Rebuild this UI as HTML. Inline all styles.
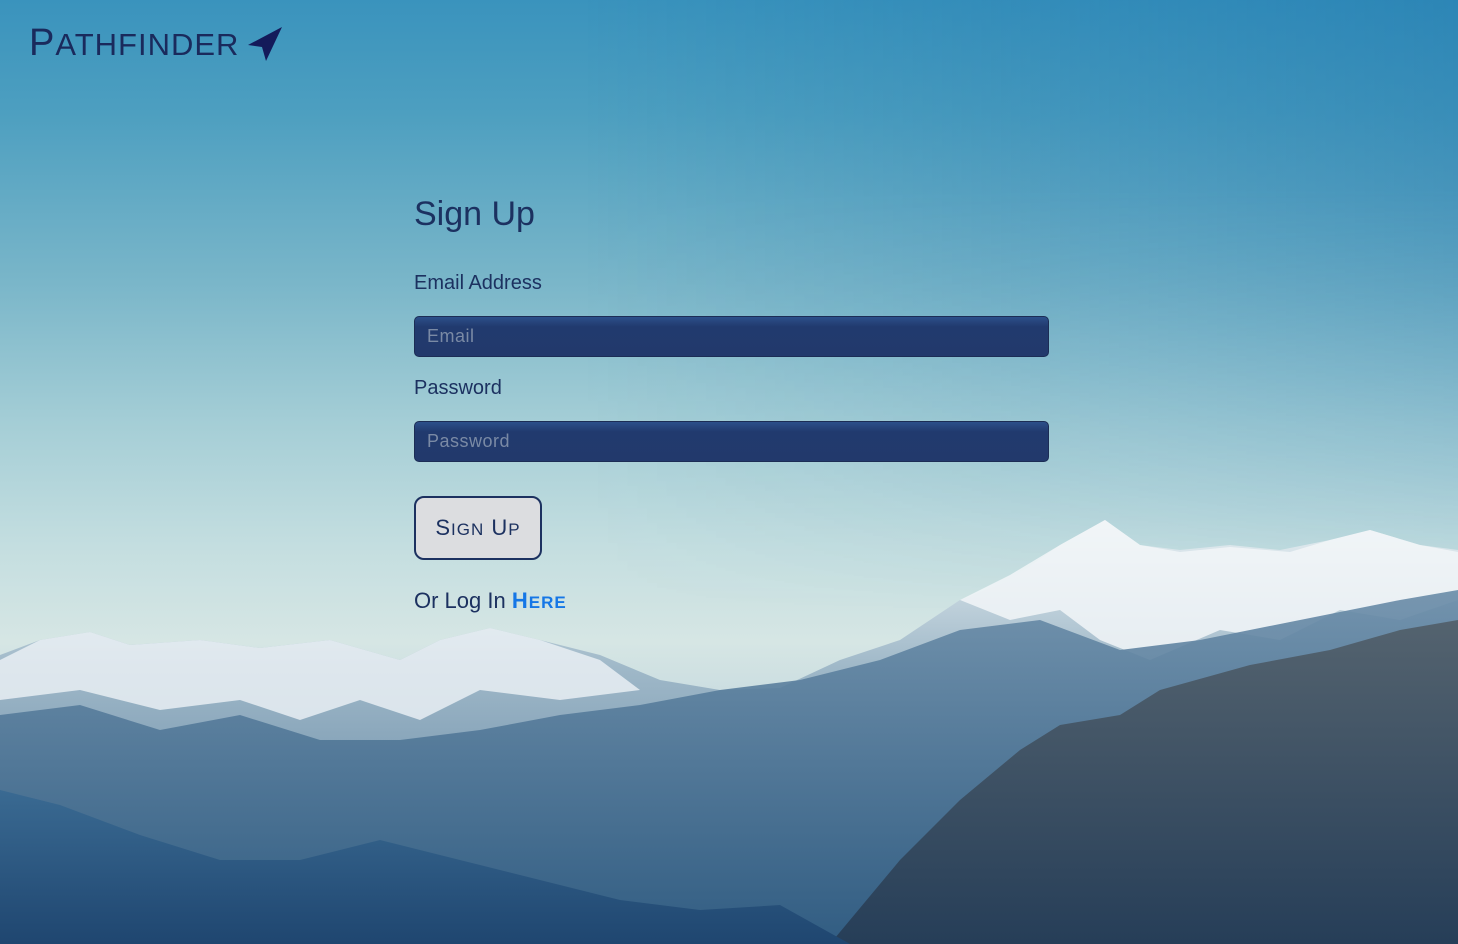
<!DOCTYPE html>
<html><head><meta charset="utf-8"><style>
html,body{margin:0;width:1458px;height:944px;overflow:hidden;font-family:"Liberation Sans",sans-serif;}
body{position:relative;background:linear-gradient(180deg,#3a93bd 0%,#4d9fc0 12%,#7ab6c9 30%,#a5ced6 45%,#c4dee0 58%,#d6e6e4 68%,#c8dbe0 75%);}
.tint{position:absolute;left:0;top:0;width:1458px;height:944px;background:linear-gradient(90deg,rgba(255,255,255,0) 40%,rgba(20,110,170,.35) 100%);-webkit-mask-image:linear-gradient(#000 20%,transparent 65%);mask-image:linear-gradient(#000 20%,transparent 65%);}
svg.bg{position:absolute;left:0;top:0}
.logo{position:absolute;left:29px;top:22px;color:#1a2a5c;font-size:38px;letter-spacing:1px;white-space:nowrap}
.logo .s{font-size:31px}
.form{position:absolute;left:414px;top:0;color:#1c3160}
h1{position:absolute;top:195px;margin:0;font-weight:normal;font-size:34px;white-space:nowrap}
.lbl{position:absolute;font-size:20px;white-space:nowrap}
.in{position:absolute;border:1px solid #1c2d55;border-radius:5px;background:linear-gradient(#2c4f8a,#213a6e 25%,#22396c);color:#7a8aa5;font-size:18px;line-height:39px;padding-left:12px;box-sizing:border-box;width:635px;height:41px;letter-spacing:.5px}
.btn{position:absolute;top:496px;width:128px;height:64px;box-sizing:border-box;border:2px solid #1c3160;border-radius:10px;background:#dcdde0;font-size:22px;text-align:center;line-height:60px;letter-spacing:1px}
.btn .s,.or .s{font-size:17px}
.or{position:absolute;top:588px;font-size:22px;white-space:nowrap}
.or b{color:#1677e6;letter-spacing:1px}
</style></head><body>
<div class="tint"></div>
<svg class="bg" width="1458" height="944" viewBox="0 0 1458 944">
<defs>
<linearGradient id="far" x1="0" y1="0" x2="0" y2="1"><stop offset="0" stop-color="#e8f0f3"/><stop offset=".35" stop-color="#9fb8c8"/><stop offset="1" stop-color="#4e7597"/></linearGradient>
<linearGradient id="mid" x1="0" y1="0" x2="0" y2="1"><stop offset="0" stop-color="#6a8ca8"/><stop offset="1" stop-color="#2e5a80"/></linearGradient>
<linearGradient id="dark" x1="0" y1="0" x2="0" y2="1"><stop offset="0" stop-color="#54636f"/><stop offset="1" stop-color="#263e58"/></linearGradient>
<linearGradient id="front" x1="0" y1="0" x2="0" y2="1"><stop offset="0" stop-color="#3a6a92"/><stop offset="1" stop-color="#1f4670"/></linearGradient>
</defs>
<polygon fill="url(#far)" points="0,655 40,640 90,632 130,645 200,640 260,648 330,640 400,660 440,640 490,628 540,640 600,655 660,680 720,690 780,688 840,660 900,640 960,600 1010,580 1060,545 1105,520 1140,545 1180,550 1230,545 1280,550 1330,540 1370,530 1420,545 1458,550 1458,944 0,944"/>
<polygon fill="#f2f6f8" opacity=".85" points="960,600 1010,575 1060,545 1105,520 1140,545 1180,552 1230,547 1290,552 1330,540 1370,530 1420,545 1458,552 1458,600 1400,620 1340,610 1280,640 1220,630 1150,660 1100,640 1060,610 1010,620"/>
<polygon fill="#eef3f6" opacity=".8" points="0,660 40,640 90,632 130,645 200,640 260,648 330,640 400,660 440,640 490,628 540,640 600,660 640,690 560,700 480,690 420,720 360,700 300,720 240,700 160,710 80,690 0,700"/>
<polygon fill="url(#mid)" opacity=".9" points="0,715 80,705 160,730 240,715 320,740 400,740 480,730 560,715 640,705 720,690 800,680 880,660 960,630 1040,620 1120,650 1200,640 1300,620 1400,600 1458,590 1458,944 0,944"/>
<polygon fill="url(#dark)" points="830,944 900,860 960,800 1020,750 1060,725 1120,715 1160,690 1250,665 1330,650 1400,630 1458,620 1458,944"/>
<polygon fill="url(#front)" points="0,790 60,805 140,835 220,860 300,860 380,840 460,860 540,880 620,900 700,910 780,905 850,944 0,944"/>
</svg>
<div class="logo">P<span class="s">ATHFINDER</span><svg width="36" height="36" viewBox="0 0 36 36" style="position:absolute;left:219px;top:5px"><polygon fill="#141a5a" points="34,0 0,18 14,20 18,34"/></svg></div>
<div class="form">
<h1>Sign Up</h1>
<div class="lbl" style="top:272px">Email Address</div>
<div class="in" style="top:316px">Email</div>
<div class="lbl" style="top:377px">Password</div>
<div class="in" style="top:421px">Password</div>
<div class="btn">S<span class="s">IGN</span> U<span class="s">P</span></div>
<div class="or">Or Log In <b>H<span class="s">ERE</span></b></div>
</div>
</body></html>
